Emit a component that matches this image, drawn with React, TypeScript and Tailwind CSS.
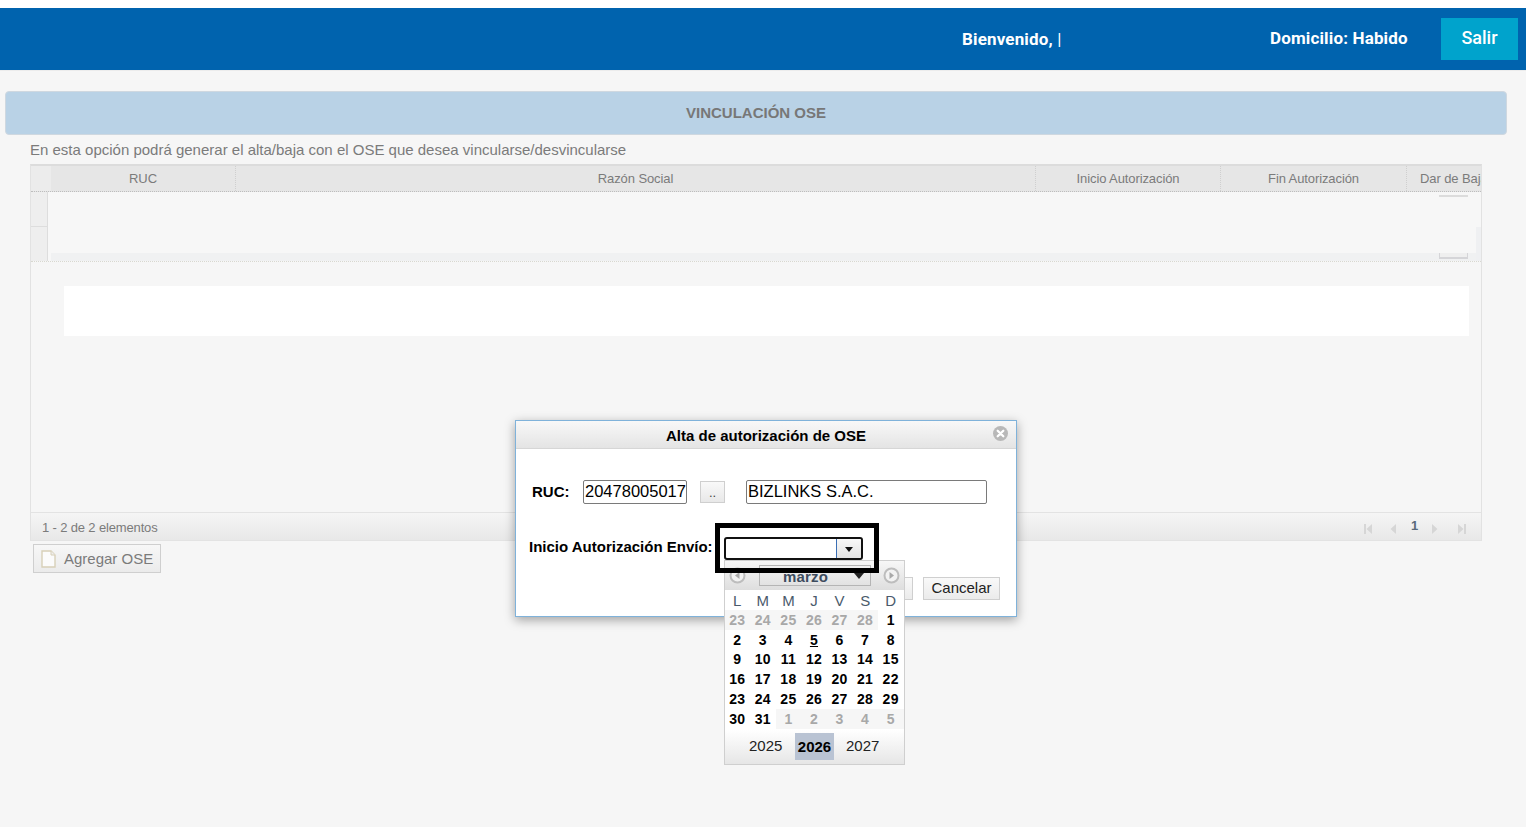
import React from "react";

const arial = "font-['Liberation_Sans',Arial,sans-serif]";

function HeaderCell({ w, label }: { w: string; label: string }) {
  return (
    <div className={`${w} h-full shrink-0 overflow-hidden whitespace-nowrap text-center leading-[26px] border-r border-dotted border-[#cfcfcf] text-[13px] tracking-[-0.1px] text-[#7b7b7b]`}>
      {label}
    </div>
  );
}

function Pager({ d, className = "" }: { d: string; className?: string }) {
  return (
    <svg className={`mt-[10px] ${className}`} width="10" height="12" viewBox="0 0 10 12" fill="#d6d6d6">
      <path d={d} />
    </svg>
  );
}

const weeks: [string, boolean][][] = [
  ["23", "24", "25", "26", "27", "28"].map((d) => [d, true] as [string, boolean]).concat([["1", false]]),
  ["2", "3", "4", "5", "6", "7", "8"].map((d) => [d, false] as [string, boolean]),
  ["9", "10", "11", "12", "13", "14", "15"].map((d) => [d, false] as [string, boolean]),
  ["16", "17", "18", "19", "20", "21", "22"].map((d) => [d, false] as [string, boolean]),
  ["23", "24", "25", "26", "27", "28", "29"].map((d) => [d, false] as [string, boolean]),
  ([["30", false], ["31", false]] as [string, boolean][]).concat(["1", "2", "3", "4", "5"].map((d) => [d, true] as [string, boolean])),
];

function CircleArrow({ dir }: { dir: "l" | "r" }) {
  return (
    <svg width="17" height="17" viewBox="0 0 17 17">
      <circle cx="8.5" cy="8.5" r="7" fill="#f2f2f2" stroke="#bdbdbd" strokeWidth="2" />
      <path d={dir === "l" ? "M10.5 5v7l-4.5-3.5z" : "M6.5 5v7l4.5-3.5z"} fill="#a9a9a9" />
    </svg>
  );
}

function Calendar() {
  return (
    <div className="absolute left-[208px] top-[139px] w-[181px] h-[205px] border border-[#cfcfcf] bg-white flex flex-col">
      <div className="h-[29px] shrink-0 flex items-center justify-between px-[4px] bg-gradient-to-b from-[#f7f7f7] to-[#dedede]">
        <CircleArrow dir="l" />
        <div className="relative w-[112px] h-[21px] border border-[#b5b5b5] pr-[18px] pt-[4px] text-center text-[15px] font-bold leading-[14px] tracking-[0.2px] text-[#3d4c5e]">
          marzo
          <span className="absolute right-[6px] top-[7px] w-0 h-0 border-x-[5px] border-x-transparent border-t-[6px] border-t-[#222]" />
        </div>
        <CircleArrow dir="r" />
      </div>
      <div className="h-[19.75px] shrink-0 grid grid-cols-7 text-center text-[15px] leading-[22px] text-[#4a5a6c]">
        {["L", "M", "M", "J", "V", "S", "D"].map((d, i) => (
          <span key={i} className="pr-[1px]">{d}</span>
        ))}
      </div>
      {weeks.map((row, i) => (
        <div key={i} className="h-[19.8px] shrink-0 grid grid-cols-7 text-center text-[14px] font-bold leading-[20px] tracking-[0.3px]">
          {row.map(([d, other], j) => (
            <span key={j} className={other ? "pr-[1px] bg-[#f6f6f6] text-[#a8a8a8]" : "pr-[1px] text-black"}>
              {d === "5" && !other ? <span className="underline">{d}</span> : d}
            </span>
          ))}
        </div>
      ))}
      <div className="flex-1 mt-[1px] flex items-center bg-gradient-to-b from-white to-[#e6e6e6] text-[15px] text-[#222] pb-[1px]">
        <span className="w-[70px] pl-[24px]">2025</span>
        <span className="w-[39px] h-[27px] bg-[#b9c3d3] font-bold text-center leading-[28px] text-black">2026</span>
        <span className="pl-[12px]">2027</span>
      </div>
    </div>
  );
}

function Dialog() {
  return (
    <div className="absolute left-[515px] top-[420px] w-[502px] h-[197px] bg-white border border-[#7fb2da] shadow-[0_3px_10px_rgba(0,0,0,0.35)]">
      <div className="relative h-[28px] border-b border-[#d6d6d6] bg-gradient-to-b from-[#f8f8f8] to-[#e4e4e4] text-center text-[15px] font-bold leading-[30px] text-black">
        Alta de autorización de OSE
        <svg className="absolute right-[8px] top-[5px]" width="15" height="15" viewBox="0 0 16 16">
          <circle cx="8" cy="8" r="8" fill="#b8b8b8" />
          <path d="M5 5l6 6M11 5l-6 6" stroke="#fff" strokeWidth="2.4" strokeLinecap="round" />
        </svg>
      </div>
      <div className="flex items-center pl-[16px] mt-[31px] h-[24px]">
        <span className="w-[51px] text-[15px] font-bold text-black">RUC:</span>
        <div className="w-[104px] h-[24px] border border-[#7a7a7a] rounded-[2px] pl-[1px] text-[16.5px] leading-[20px] text-black whitespace-nowrap overflow-hidden">20478005017</div>
        <div className="ml-[13px] w-[25px] h-[22px] border border-[#cfcfcf] bg-gradient-to-b from-[#f9f9f9] to-[#e8e8e8] text-center text-[13px] leading-[22px] text-[#444]">..</div>
        <div className="ml-[21px] w-[241px] h-[24px] border border-[#7a7a7a] rounded-[2px] pl-[1px] text-[16.5px] leading-[20px] text-black">BIZLINKS S.A.C.</div>
      </div>
      <div className="flex items-start pl-[13px] mt-[33px] h-[23px]">
        <span className="w-[195px] text-[15px] font-bold whitespace-nowrap text-black leading-[20px]">Inicio Autorización Envío:</span>
        <div className="relative w-[139px] h-[23px] border-2 border-[#111] rounded-[3px] flex justify-end">
          <div className="w-[25px] h-full border-l border-[#3b6fb5] bg-gradient-to-b from-[#f8f8f8] to-[#e3e3e3] flex items-center justify-center rounded-r-[2px]">
            <span className="w-0 h-0 border-x-[4.5px] border-x-transparent border-t-[5px] border-t-[#111] mt-[2px]" />
          </div>
        </div>
      </div>
      <div className="flex justify-end pr-[16px] mt-[17px] gap-[10px]">
        <div className="w-[40px] h-[23px] border border-[#cfcfcf] bg-gradient-to-b from-[#f9f9f9] to-[#ebebeb]" />
        <div className="w-[77px] h-[23px] border border-[#cfcfcf] bg-gradient-to-b from-[#f9f9f9] to-[#ebebeb] text-center text-[15px] leading-[19px] text-[#222]">Cancelar</div>
      </div>
      <Calendar />
      <div className="absolute left-[199px] top-[102px] w-[164px] h-[50px] border-[5px] border-black pointer-events-none" />
    </div>
  );
}

export default function App() {
  return (
    <div className={`${arial} relative min-h-[827px] overflow-hidden bg-[#f6f6f6]`}>
      <div className="h-2 bg-white" />
      <header className="relative h-[62px] bg-[#0063ae] font-['Roboto',sans-serif] text-white font-bold text-[17px] tracking-[0.15px] flex items-start">
        <div className="ml-[962px] mt-[21px] w-[308px] whitespace-nowrap leading-[20px]">
          Bienvenido, <span className="font-normal">|</span>
        </div>
        <div className="mt-[20px] w-[171px] whitespace-nowrap leading-[20px]">Domicilio: Habido</div>
        <div className="mt-[10px] w-[77px] h-[42px] bg-[#00a3cc] text-center text-[18px] font-medium tracking-normal leading-[40px]">Salir</div>
      </header>
      <div className="h-[1px] bg-[#ececec]" />
      <div className="ml-[5px] mt-[20px] w-[1502px] h-[44px] rounded-[4px] border border-[#cfd8e0] bg-[#b9d2e6] text-center text-[15px] font-bold leading-[41px] text-[#777]">
        VINCULACIÓN OSE
      </div>
      <p className="ml-[30px] mt-[5px] h-[24px] text-[15px] leading-[20px] text-[#7b7b7b]">
        En esta opción podrá generar el alta/baja con el OSE que desea vincularse/desvincularse
      </p>
      <div className="ml-[30px] w-[1452px] h-[377px] border-x border-[#e2e2e2] border-t-2 border-t-[#dcdcdc] flex flex-col">
        <div className="h-[26px] shrink-0 flex bg-[#e6e6e6] border-b border-dotted border-[#bdbdbd]">
          <div className="w-[20px] shrink-0 bg-[#ececec]" />
          <HeaderCell w="w-[185px]" label="RUC" />
          <HeaderCell w="w-[800px]" label="Razón Social" />
          <HeaderCell w="w-[185px]" label="Inicio Autorización" />
          <HeaderCell w="w-[186px]" label="Fin Autorización" />
          <div className="flex-1 overflow-hidden whitespace-nowrap pl-[13px] text-[13px] leading-[26px] tracking-[-0.1px] text-[#7b7b7b]">Dar de Baja</div>
        </div>
        <div className="relative h-[70px] shrink-0 flex border-b border-dotted border-[#d8d8d0] bg-[#f7f7f7]">
          <div className="w-[17px] shrink-0 flex flex-col">
            <div className="h-[35px] bg-[#eeeeee] border-r border-[#dddddd] border-b" />
            <div className="flex-1 bg-[#eeeeee] border-r border-[#dddddd]" />
          </div>
          <div className="flex-1 flex flex-col pl-[3px]">
            <div className="flex-1" />
            <div className="h-[8px] bg-[#f0f1f2]" />
          </div>
          <div className="absolute right-0 top-[35px] bottom-0 w-[5px] bg-[#eff0f2]" />
          <div className="absolute right-[13px] top-[3px] w-[29px] h-[2px] bg-[#dcdcdc]" />
          <div className="absolute right-[13px] bottom-[2px] w-[29px] h-[6px] border-b-2 border-x border-[#d5d5d8] bg-[#efefef]" />
        </div>
        <div className="flex-1 pl-[33px] pr-[12px] pt-[24px] bg-[#f6f6f6]">
          <div className="h-[50px] bg-white" />
        </div>
        <div className="h-[29px] shrink-0 flex justify-between border-y border-[#e3e3e3] bg-gradient-to-b from-[#f5f5f5] to-[#e8e8e8] pl-[11px] pr-[14px] text-[13px] leading-[29px] tracking-[-0.15px] text-[#7b7b7b]">
          <span>1 - 2 de 2 elementos</span>
          <div className="flex items-start">
            <Pager d="M1 1h2v10H1zM9 1v10L3.5 6z" />
            <Pager className="ml-[15px]" d="M8 1v10L2.5 6z" />
            <span className="ml-[13px] w-[6px] text-[13px] leading-[26px] font-bold text-[#5a6a7a]">1</span>
            <Pager className="ml-[13px]" d="M2 1v10l5.5-5z" />
            <Pager className="ml-[17px]" d="M1 1v10l5.5-5zM7 1h2v10H7z" />
          </div>
        </div>
      </div>
      <div className="ml-[33px] mt-[3px] w-[128px] h-[29px] border border-[#cfcfcf] bg-gradient-to-b from-[#f7f7f7] to-[#ebebeb] flex items-center pl-[7px] gap-[8px] whitespace-nowrap text-[15px] leading-[27px] text-[#7b7b7b]">
        <svg width="15" height="18" viewBox="0 0 15 18">
          <path d="M1 1h9l4 4v12H1z" fill="#fbfbfb" stroke="#d8d0b8" strokeWidth="1.4" />
          <path d="M10 1v4h4" fill="#eeeeee" stroke="#d8d0b8" strokeWidth="1" />
        </svg>
        <span>Agregar OSE</span>
      </div>
      <Dialog />
    </div>
  );
}
